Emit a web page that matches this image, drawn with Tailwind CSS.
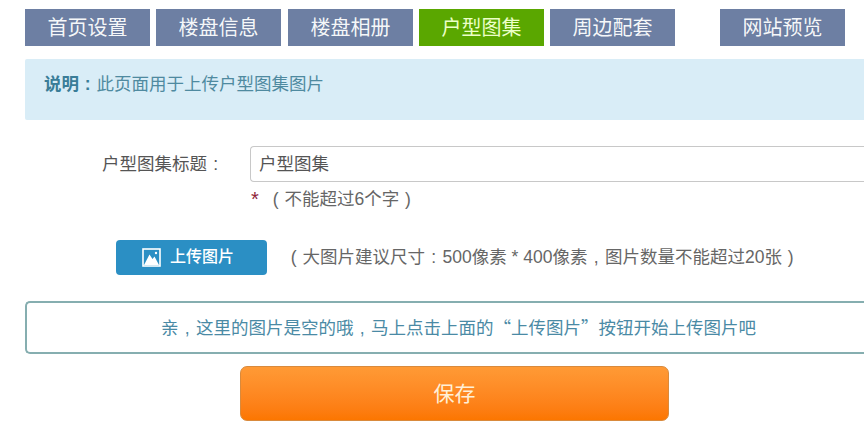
<!DOCTYPE html>
<html lang="zh">
<head>
<meta charset="utf-8">
<script src="https://cdn.jsdelivr.net/npm/@tailwindcss/browser@4"></script>
</head>
<body class="bg-white overflow-hidden">
<div class="w-[864px] h-[440px] overflow-hidden pl-[25px] pt-[9px] font-['Liberation_Sans','Noto_Sans_CJK_SC',sans-serif] text-[#555]">
  <nav class="flex h-[37px] text-[20px] text-white/95">
    <a class="w-[125px] flex items-center justify-center bg-[#6d7fa3]">首页设置</a>
    <a class="w-[125px] ml-[6px] flex items-center justify-center bg-[#6d7fa3]">楼盘信息</a>
    <a class="w-[125px] ml-[7px] flex items-center justify-center bg-[#6d7fa3]">楼盘相册</a>
    <a class="w-[125px] ml-[6px] flex items-center justify-center bg-[#5aa700] text-[#ecffc8]">户型图集</a>
    <a class="w-[125px] ml-[6px] flex items-center justify-center bg-[#6d7fa3]">周边配套</a>
    <a class="w-[125px] ml-[45px] flex items-center justify-center bg-[#6d7fa3]">网站预览</a>
  </nav>

  <div class="mt-[13px] h-[61px] w-[839px] bg-[#d9edf7] rounded-l-[2px] pl-[19px] pt-[14px] text-[17.5px] leading-[22px] text-[#4f8aa0]">
    <b class="text-[#3a7d98] font-bold">说明<span class="inline-block w-[17.5px] text-center">:</span></b>此页面用于上传户型图集图片
  </div>

  <div class="mt-[26px] flex">
    <label class="w-[225px] h-[36px] pl-[77px] flex items-center text-[17.5px] text-[#555]">户型图集标题<span class="inline-block w-[17.5px] text-center">:</span></label>
    <div class="h-[36px] w-[614px] border border-r-0 border-[#c8c8c8] rounded-l-[4px] pl-[8px] flex items-center text-[17.5px] text-[#555]">户型图集</div>
  </div>
  <div class="mt-[5px] ml-[226px] h-[24px] flex items-center text-[17.5px] text-[#666]">
    <span class="text-[#8f1f3a] text-[20px] w-[16px]">*</span><span class="inline-block w-[17.5px] text-center">(</span><span>不能超过6个字</span><span class="inline-block w-[17.5px] text-center">)</span>
  </div>

  <div class="mt-[28px] flex items-center h-[36px]">
    <button class="ml-[91px] w-[151px] h-[35px] bg-[#2b8fc4] rounded-[4px] flex items-center text-white text-[16px] font-medium">
      <svg class="ml-[26px] mr-[9px]" width="19" height="19" viewBox="0 0 19 19" aria-hidden="true">
        <rect x="1" y="1" width="17" height="17" fill="none" stroke="#fff" stroke-width="1.6"/>
        <path d="M2 17 L7.5 6.5 L10.5 11 L12.5 8.5 L17 17 Z" fill="#fff"/>
        <circle cx="14" cy="5" r="1.2" fill="#fff"/>
      </svg>
      上传图片
    </button>
    <span class="ml-[18px] text-[17.5px] text-[#666] whitespace-nowrap"><span class="inline-block w-[17.5px] text-center">(</span>大图片建议尺寸<span class="inline-block w-[17.5px] text-center">:</span>500像素 * 400像素<span class="inline-block w-[17.5px] text-center">,</span>图片数量不能超过20张<span class="inline-block w-[17.5px] text-center">)</span></span>
  </div>

  <div class="mt-[26px] h-[53px] w-[839px] border-2 border-r-0 border-[#86aeb0] rounded-l-[5px] pl-[26px] flex items-center justify-center text-[17.5px] text-[#4a8aa5]">
    <span>亲<span class="inline-block w-[17.5px] text-center">,</span>这里的图片是空的哦<span class="inline-block w-[17.5px] text-center">,</span>马上点击上面的<span class="font-['Noto_Sans_CJK_SC']">“</span>上传图片<span class="font-['Noto_Sans_CJK_SC']">”</span>按钮开始上传图片吧</span>
  </div>

  <button class="block mt-[12px] ml-[215px] w-[429px] h-[55px] rounded-[7px] border border-[#d98a3c] bg-gradient-to-b from-[#ff9a35] to-[#fc7600] text-[21px] text-[#fff0d8]">保存</button>
</div>
</body>
</html>
